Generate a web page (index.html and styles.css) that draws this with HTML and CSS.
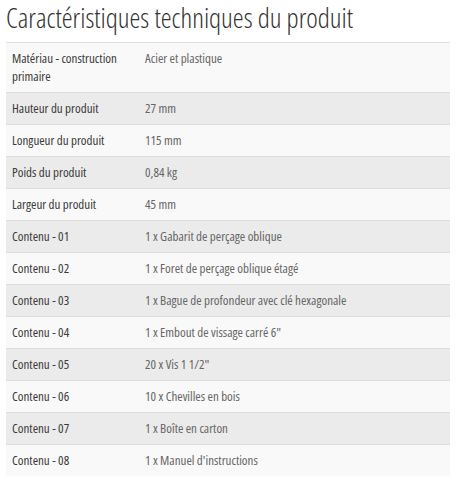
FILE: index.html
```html
<!DOCTYPE html>
<html lang="fr">
<head>
<meta charset="utf-8">
<title>Caractéristiques techniques du produit</title>
<link rel="stylesheet" href="styles.css">
</head>
<body>
<div class="page">
  <h2 class="title">Caractéristiques techniques du produit</h2>
  <table class="specs">
    <tbody>
      <tr><th>Matériau - construction primaire</th><td>Acier et plastique</td></tr>
      <tr><th>Hauteur du produit</th><td>27 mm</td></tr>
      <tr><th>Longueur du produit</th><td>115 mm</td></tr>
      <tr><th>Poids du produit</th><td>0,84 kg</td></tr>
      <tr><th>Largeur du produit</th><td>45 mm</td></tr>
      <tr><th>Contenu - 01</th><td>1 x Gabarit de perçage oblique</td></tr>
      <tr><th>Contenu - 02</th><td>1 x Foret de perçage oblique étagé</td></tr>
      <tr><th>Contenu - 03</th><td>1 x Bague de profondeur avec clé hexagonale</td></tr>
      <tr><th>Contenu - 04</th><td>1 x Embout de vissage carré 6"</td></tr>
      <tr><th>Contenu - 05</th><td>20 x Vis 1 1/2"</td></tr>
      <tr><th>Contenu - 06</th><td>10 x Chevilles en bois</td></tr>
      <tr><th>Contenu - 07</th><td>1 x Boîte en carton</td></tr>
      <tr><th>Contenu - 08</th><td>1 x Manuel d'instructions</td></tr>
    </tbody>
  </table>
</div>
</body>
</html>
```

FILE: styles.css
```css
html, body {
  margin: 0;
  padding: 0;
  background: #ffffff;
}

.page {
  padding: 3px 6px 0 6px;
  font-family: "Open Sans", "Liberation Sans", Arial, sans-serif;
  font-stretch: 75%;
}

.title {
  margin: 0 0 9px 0;
  font-size: 27.5px;
  line-height: 30px;
  font-weight: 300;
  font-stretch: 75%;
  color: #333333;
}

.specs {
  width: 444px;
  border-collapse: collapse;
  border-top: 1px solid #dddddd;
  font-size: 13px;
  line-height: 18px;
  font-stretch: 75%;
}

.specs th,
.specs td {
  padding: 6px 6px 7px 6px;
  text-align: left;
  vertical-align: top;
  border-bottom: 1px solid #dddddd;
}

.specs th {
  width: 121px;
  font-weight: normal;
  color: #3a3a3a;
}

.specs td {
  color: #666666;
}

.specs tr:nth-child(odd) {
  background: #f9f9f9;
}

.specs tr:nth-child(even) {
  background: #ebebeb;
}

.specs tr:last-child th,
.specs tr:last-child td {
  border-bottom: none;
}
```
